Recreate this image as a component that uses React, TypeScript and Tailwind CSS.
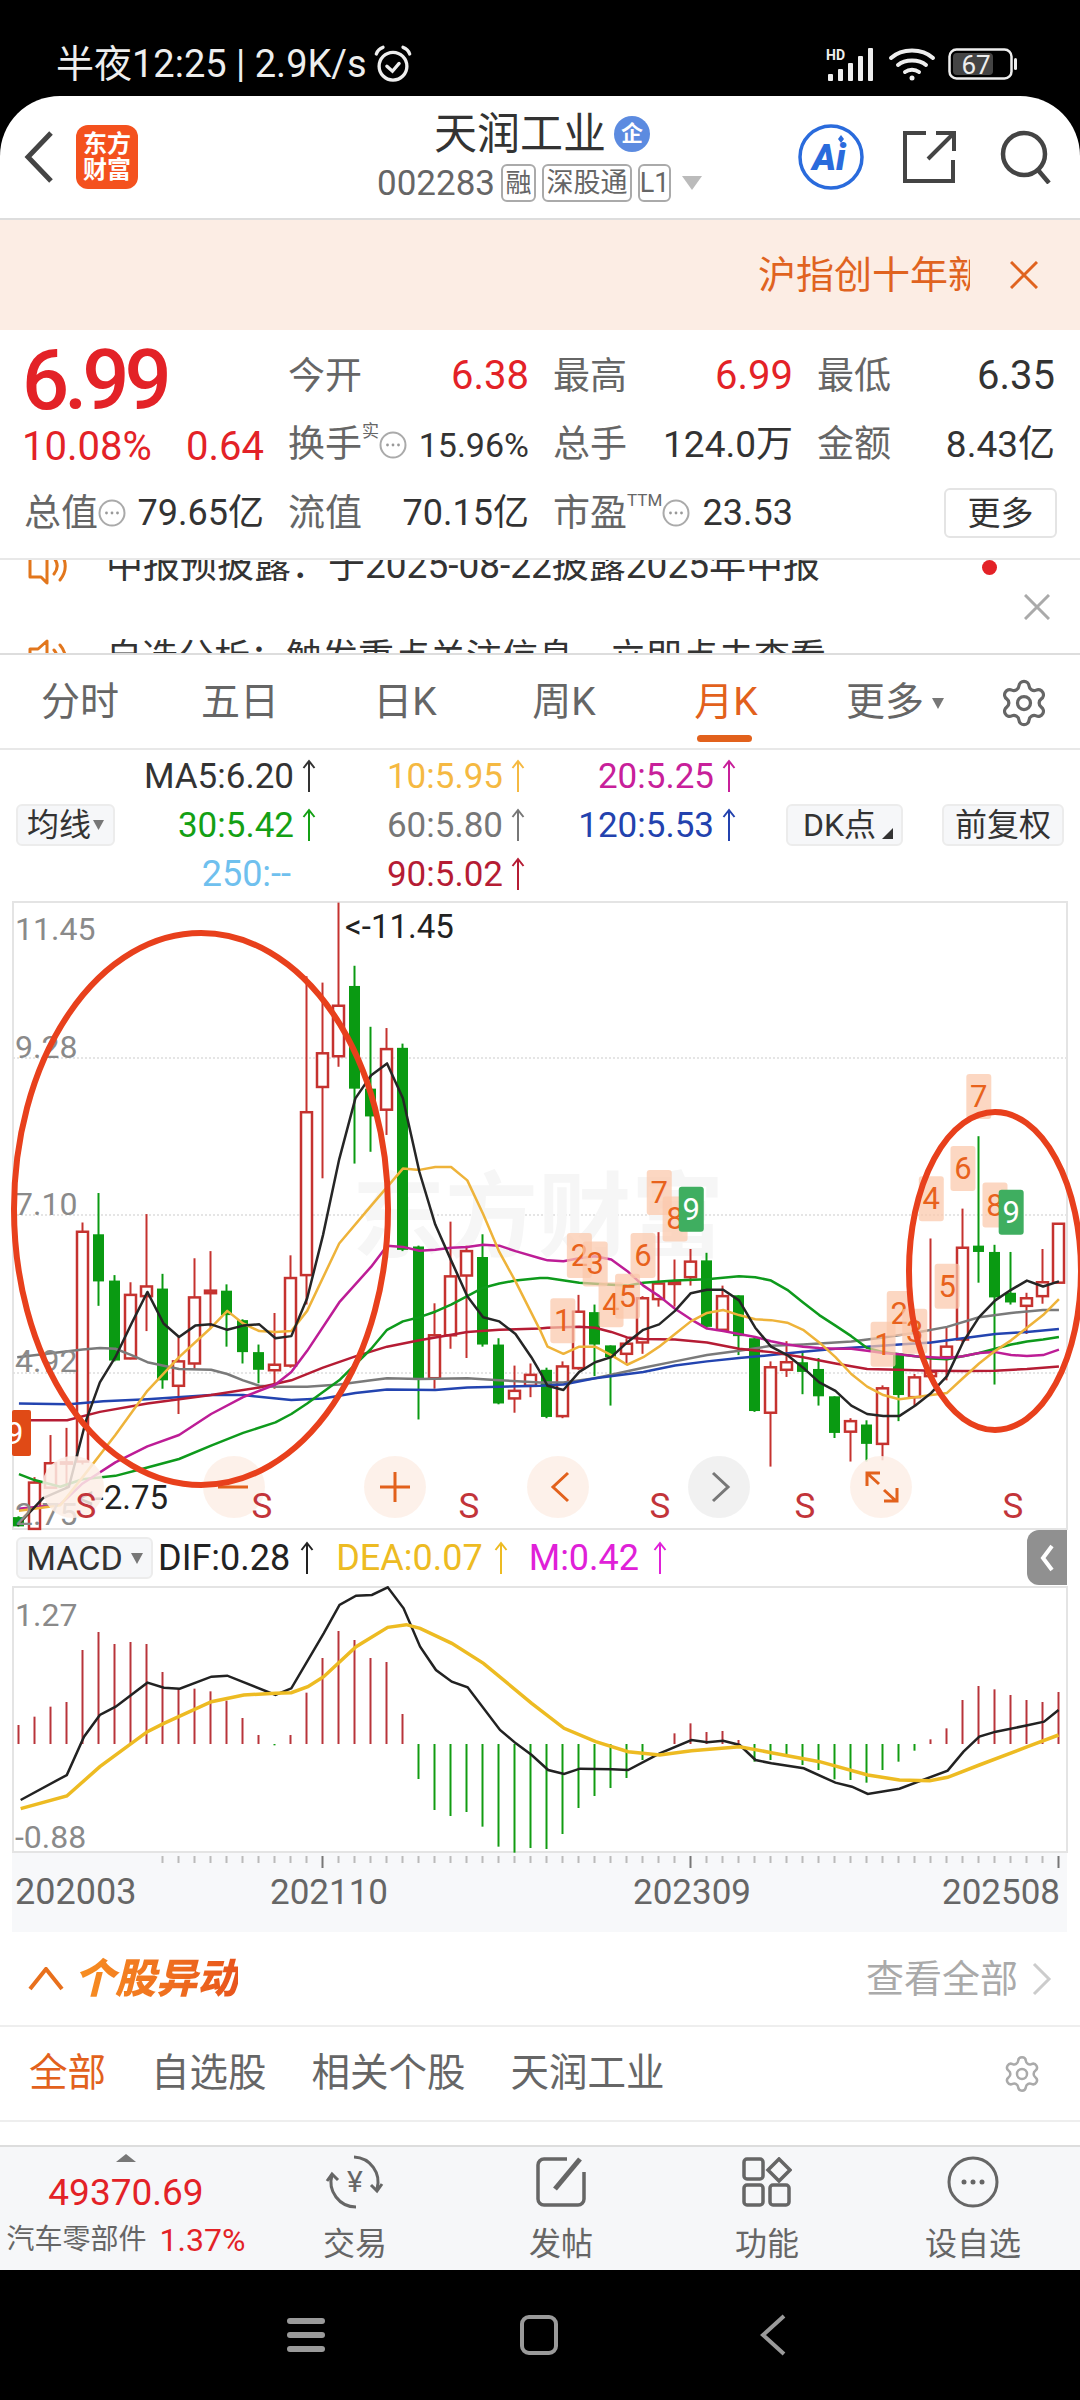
import { Settings } from 'lucide-react';

const RED = '#c5322f';
const GREEN = '#0a9a12';
const ORANGE = '#e2611c';

// crop coordinates -> page coordinates
const ly = (z: number) => 890 + z / 2.376;
const lx = (z: number) => z / 2.904;
const rx = (z: number) => 540 + z / 2.904;
const my = (z: number) => 1530 + z / 3;
const mx = (z: number) => z / 1.452;
const cx = (i: number) => 18.5 + 16 * i;

// i, high, top, bottom, low, up
const candles: [number, number, number, number, number, number][] = [
  [0, 1488, 1490, 1512, 1512, 0], [1, 1395, 1408, 1518, 1518, 1], [2, 1295, 1362, 1420, 1420, 1],
  [3, 1278, 1360, 1363, 1420, 1], [4, 790, 812, 1358, 1365, 1], [5, 720, 818, 930, 988, 0],
  [6, 915, 928, 1118, 1120, 0], [7, 932, 962, 1113, 1115, 1], [8, 770, 942, 965, 1048, 1],
  [9, 912, 947, 1165, 1185, 0], [10, 1060, 1120, 1178, 1245, 1], [11, 875, 968, 1125, 1140, 1],
  [12, 858, 952, 958, 1040, 1], [13, 937, 952, 1010, 1085, 0], [14, 1020, 1022, 1098, 1125, 0],
  [15, 1080, 1098, 1140, 1172, 0], [16, 1005, 1128, 1141, 1185, 1], [17, 868, 922, 1130, 1135, 1],
  [18, 205, 528, 915, 985, 1], [19, 220, 388, 468, 685, 1], [20, 30, 275, 395, 420, 1],
  [21, 180, 228, 472, 650, 0], [22, 325, 472, 538, 622, 0], [23, 328, 378, 522, 582, 1],
  [24, 365, 375, 855, 858, 0], [25, 845, 847, 1160, 1258, 0], [26, 982, 1058, 1160, 1185, 1],
  [27, 788, 918, 1058, 1090, 1], [28, 845, 858, 916, 1112, 1], [29, 818, 872, 1080, 1085, 0],
  [30, 1065, 1080, 1220, 1222, 0], [31, 1130, 1190, 1208, 1242, 1], [32, 1125, 1152, 1178, 1205, 1],
  [33, 1135, 1140, 1252, 1255, 0], [34, 1120, 1132, 1250, 1255, 1], [35, 962, 1002, 1136, 1140, 1],
  [36, 985, 1003, 1080, 1155, 0], [37, 1082, 1082, 1110, 1225, 0], [38, 1065, 1078, 1102, 1125, 1],
  [39, 965, 970, 1075, 1102, 1], [40, 813, 935, 972, 990, 1], [41, 878, 932, 936, 990, 1],
  [42, 853, 883, 920, 940, 1], [43, 862, 880, 1038, 1040, 0], [44, 940, 965, 1045, 1050, 1],
  [45, 963, 963, 1060, 1105, 0], [46, 1062, 1065, 1238, 1240, 0], [47, 1120, 1134, 1242, 1370, 1],
  [48, 1072, 1122, 1140, 1157, 1], [49, 1095, 1122, 1145, 1198, 0], [50, 1112, 1138, 1203, 1225, 0],
  [51, 1203, 1203, 1290, 1302, 0], [52, 1255, 1262, 1287, 1358, 1], [53, 1260, 1270, 1316, 1358, 0],
  [54, 1177, 1184, 1316, 1355, 1], [55, 1100, 1105, 1200, 1262, 0], [56, 1150, 1158, 1205, 1225, 1],
  [57, 828, 1145, 1155, 1158, 1], [58, 1040, 1085, 1110, 1165, 1], [59, 757, 850, 1068, 1075, 1],
  [60, 585, 845, 860, 933, 0], [61, 843, 860, 968, 1175, 0], [62, 860, 957, 980, 985, 0],
  [63, 957, 970, 988, 1055, 1], [64, 853, 932, 965, 983, 1], [65, 793, 793, 933, 933, 1],
];

type Pts = [number, number][];
const maLines: { color: string; width: number; left: Pts; right: Pts }[] = [
  {
    color: '#7a7a7a', width: 2.5,
    left: [[50, 1110], [240, 1092], [290, 1088], [335, 1090], [382, 1105], [428, 1122], [520, 1138], [613, 1140], [660, 1150], [706, 1165], [753, 1178], [800, 1180], [892, 1180], [985, 1175], [1078, 1165], [1124, 1160], [1218, 1162], [1357, 1160], [1450, 1165], [1568, 1170]],
    right: [[68, 1170], [160, 1160], [300, 1135], [392, 1120], [485, 1105], [578, 1095], [671, 1083], [764, 1080], [904, 1073], [997, 1063], [1090, 1052], [1182, 1038], [1275, 1015], [1368, 1005], [1461, 998], [1507, 998]],
  },
  {
    color: '#2344b0', width: 2.5,
    left: [[55, 1220], [200, 1222], [300, 1215], [428, 1210], [613, 1200], [706, 1200], [846, 1212], [938, 1208], [1032, 1195], [1124, 1187], [1264, 1188], [1357, 1182], [1568, 1178]],
    right: [[68, 1175], [160, 1160], [300, 1145], [392, 1130], [485, 1120], [578, 1112], [671, 1105], [764, 1097], [858, 1090], [950, 1085], [1043, 1080], [1136, 1075], [1228, 1065], [1322, 1055], [1414, 1050], [1507, 1043]],
  },
  {
    color: '#b51c34', width: 2.5,
    left: [[36, 1260], [195, 1260], [290, 1240], [428, 1220], [613, 1200], [753, 1182], [846, 1165], [938, 1135], [1032, 1108], [1124, 1085], [1218, 1070], [1357, 1050], [1450, 1045], [1568, 1042]],
    right: [[22, 1040], [114, 1038], [160, 1040], [207, 1050], [253, 1063], [300, 1067], [392, 1068], [485, 1075], [578, 1090], [671, 1098], [764, 1110], [858, 1125], [950, 1138], [1043, 1140], [1136, 1142], [1228, 1143], [1322, 1142], [1414, 1138], [1507, 1132]],
  },
  {
    color: '#0e9a1c', width: 2.5,
    left: [[55, 1388], [100, 1402], [175, 1418], [240, 1400], [335, 1392], [428, 1372], [520, 1352], [613, 1320], [706, 1290], [800, 1265], [846, 1245], [892, 1220], [985, 1165], [1078, 1090], [1124, 1045], [1170, 1025], [1218, 1015], [1264, 1002], [1310, 985], [1357, 965], [1403, 945], [1450, 935], [1497, 928], [1568, 922]],
    right: [[22, 922], [114, 933], [207, 938], [253, 940], [300, 933], [392, 928], [485, 925], [578, 918], [625, 920], [671, 928], [718, 950], [764, 980], [811, 1010], [858, 1035], [904, 1060], [950, 1088], [997, 1098], [1043, 1103], [1090, 1108], [1136, 1113], [1182, 1115], [1228, 1108], [1275, 1100], [1322, 1090], [1368, 1080], [1414, 1073], [1461, 1068], [1507, 1062]],
  },
  {
    color: '#bd1d96', width: 2.5,
    left: [[55, 1470], [175, 1460], [240, 1410], [335, 1360], [428, 1322], [520, 1295], [613, 1245], [706, 1205], [800, 1175], [846, 1145], [892, 1095], [985, 980], [1078, 895], [1124, 845], [1170, 848], [1218, 857], [1264, 855], [1310, 850], [1357, 848], [1403, 843], [1450, 845], [1497, 858], [1568, 875]],
    right: [[22, 880], [68, 882], [114, 875], [160, 870], [207, 878], [253, 905], [300, 940], [346, 965], [392, 995], [438, 1020], [485, 1042], [532, 1048], [578, 1055], [625, 1062], [671, 1072], [718, 1080], [764, 1085], [811, 1088], [858, 1090], [904, 1090], [950, 1095], [997, 1100], [1043, 1103], [1090, 1108], [1136, 1110], [1182, 1112], [1228, 1108], [1275, 1100], [1322, 1098], [1368, 1105], [1414, 1107], [1461, 1105], [1507, 1092]],
  },
  {
    color: '#eeb33a', width: 2.5,
    left: [[55, 1475], [175, 1462], [240, 1395], [335, 1295], [428, 1190], [520, 1110], [613, 1040], [660, 1000], [706, 1030], [753, 1048], [800, 1050], [846, 1048], [892, 1000], [985, 840], [1078, 750], [1170, 662], [1218, 665], [1264, 658], [1310, 658], [1357, 690], [1403, 770], [1450, 860], [1497, 930], [1568, 1045]],
    right: [[22, 1085], [68, 1102], [114, 1085], [160, 1085], [207, 1105], [253, 1128], [300, 1110], [346, 1085], [392, 1055], [438, 1025], [485, 1005], [532, 998], [578, 1010], [625, 1020], [671, 1022], [718, 1028], [764, 1045], [811, 1075], [858, 1110], [904, 1150], [950, 1180], [997, 1200], [1043, 1210], [1090, 1205], [1136, 1200], [1182, 1195], [1228, 1160], [1275, 1125], [1322, 1095], [1368, 1070], [1414, 1040], [1461, 1010], [1507, 972]],
  },
  {
    color: '#262626', width: 2.5,
    left: [[50, 1510], [125, 1445], [200, 1418], [250, 1260], [290, 1170], [335, 1110], [382, 1030], [428, 955], [475, 1030], [520, 1062], [567, 1035], [613, 1032], [660, 1045], [706, 1035], [753, 1032], [800, 1065], [846, 1060], [892, 970], [938, 820], [985, 640], [1032, 495], [1078, 440], [1124, 412], [1170, 495], [1218, 670], [1264, 795], [1310, 880], [1357, 965], [1403, 1015], [1450, 1025], [1497, 1055], [1543, 1110]],
    right: [[0, 1145], [22, 1178], [68, 1188], [114, 1145], [160, 1122], [207, 1110], [253, 1075], [300, 1045], [346, 1032], [392, 1000], [438, 958], [485, 950], [532, 950], [578, 975], [625, 1040], [671, 1085], [718, 1105], [764, 1135], [811, 1170], [858, 1190], [904, 1225], [950, 1245], [997, 1250], [1043, 1250], [1090, 1225], [1136, 1195], [1182, 1155], [1228, 1075], [1275, 1015], [1322, 975], [1368, 950], [1414, 928], [1461, 942], [1507, 930]],
  },
];

const tags: [string, number, number][] = [
  ['1', 30, 970], ['2', 78, 815], ['3', 124, 835], ['4', 170, 932], ['5', 218, 912], ['6', 263, 815],
  ['7', 310, 665], ['8', 356, 728], ['9', 403, 705],
  ['1', 960, 1026], ['2', 1007, 953], ['3', 1052, 995], ['4', 1100, 680], ['5', 1146, 888], ['6', 1192, 608],
  ['7', 1238, 437], ['8', 1285, 695], ['9', 1332, 712],
];

// top of the red bars and bottom of the green ones, from the first month
const macdBars = [
  585, 560, 530, 516, 360, 306, 342, 336, 342, 426, 476, 476, 484, 512, 564, 615, 646, 615, 488, 384, 303, 330, 384, 396, 552,
  747, 840, 858, 846, 890, 950, 968, 954, 957, 912, 834, 798, 774, 744, 690, 642,
  610, 580, 606, 603, 630, 695, 690, 680, 705, 720, 748, 750, 758, 720, 695, 662,
  628, 595, 510, 468, 478, 495, 510, 516, 486,
];
const dif: Pts = [[30, 810], [97, 735], [122, 620], [145, 555], [168, 530], [214, 458], [238, 473], [261, 476], [307, 440], [330, 437], [400, 495], [423, 475], [470, 310], [493, 225], [517, 197], [540, 195], [563, 172], [586, 235], [610, 350], [633, 420], [656, 455], [679, 472], [726, 600], [749, 640], [772, 675], [796, 720], [819, 732], [842, 716], [888, 718], [912, 720], [958, 670], [1004, 630], [1027, 637], [1050, 632], [1074, 645], [1097, 690], [1120, 700], [1167, 715], [1213, 758], [1237, 770], [1260, 792], [1306, 776], [1376, 722], [1399, 665], [1422, 620], [1446, 605], [1492, 586], [1516, 575], [1537, 540]];
const dea: Pts = [[30, 836], [97, 798], [145, 710], [214, 605], [238, 580], [307, 515], [354, 495], [400, 490], [423, 488], [447, 470], [470, 440], [517, 350], [563, 292], [590, 284], [610, 295], [656, 340], [702, 400], [772, 520], [819, 595], [865, 635], [912, 665], [958, 675], [1004, 662], [1074, 650], [1120, 668], [1190, 695], [1260, 735], [1306, 750], [1350, 752], [1376, 742], [1422, 705], [1492, 650], [1537, 615]];

function UpArrow({ className }: { className: string }) {
  return (
    <svg width="16" height="34" viewBox="0 0 16 34" fill="none" stroke="currentColor" strokeWidth="2" className={className}>
      <path d="M8 33V2M2.5 9 8 2l5.5 7" />
    </svg>
  );
}

function Legend({ text, color }: { text: string; color: string }) {
  return (
    <div className={`flex items-center justify-end gap-[7px] ${color}`}>
      <span>{text}</span>
      <UpArrow className="shrink-0" />
    </div>
  );
}

function DotsBadge() {
  return (
    <svg width="28" height="28" viewBox="0 0 28 28" fill="none" className="shrink-0">
      <circle cx="14" cy="14" r="12.5" stroke="#aaa" strokeWidth="2" />
      <circle cx="8.5" cy="14" r="1.4" fill="#999" />
      <circle cx="14" cy="14" r="1.4" fill="#999" />
      <circle cx="19.5" cy="14" r="1.4" fill="#999" />
    </svg>
  );
}

function Speaker() {
  return (
    <svg width="46" height="46" viewBox="0 0 46 46" fill="none" stroke="#e2761c" strokeWidth="3" className="shrink-0">
      <path d="M3 14h8l9-8v34l-6-6H3z" strokeLinejoin="round" />
      <path d="M27 15c4 5 4 11 0 16M33 10c7 8 7 18 0 27" strokeLinecap="round" />
    </svg>
  );
}

function Stat({ label, value, valueClass, children }: { label: string; value: string; valueClass?: string; children?: React.ReactNode }) {
  return (
    <div className="flex items-center justify-between">
      <div className="flex items-center">
        <span className="text-[37px] text-[#666]">{label}</span>
        {children}
      </div>
      <span className={valueClass ?? 'text-[36px] text-[#333]'}>{value}</span>
    </div>
  );
}

function KLineChart() {
  return (
    <svg viewBox="0 900 1080 630" width="1080" height="630" className="block overflow-visible">
      <rect x="13" y="902" width="1054" height="627" fill="#fff" stroke="#e4e4e4" strokeWidth="2" />
      {[1058, 1215, 1373].map((y) => (
        <line key={y} x1="13" x2="1066" y1={y} y2={y} stroke="#ddd" strokeWidth="1.5" strokeDasharray="2 2" />
      ))}
      <text x="352" y="1250" fontSize="93" fontWeight="700" fill="#f6f6f6">东方财富</text>

      {candles.map(([i, high, top, bottom, low, up]) => {
        const x = cx(i);
        const color = up ? RED : GREEN;
        return (
          <g key={i}>
            <line x1={x} x2={x} y1={ly(high)} y2={ly(low)} stroke={color} strokeWidth="2" />
            {up ? (
              <rect x={x - 5.5} y={ly(top)} width="11" height={Math.max(ly(bottom) - ly(top), 1)} fill="#fff" stroke={color} strokeWidth="2.5" />
            ) : (
              <rect x={x - 5.5} y={ly(top)} width="11" height={ly(bottom) - ly(top)} fill={color} />
            )}
          </g>
        );
      })}

      {maLines.map((m) => (
        <polyline
          key={m.color}
          fill="none"
          stroke={m.color}
          strokeWidth={m.width}
          strokeLinejoin="round"
          points={[...m.left.map(([x, y]) => `${lx(x)},${ly(y)}`), ...m.right.map(([x, y]) => `${rx(x)},${ly(y)}`)].join(' ')}
        />
      ))}

      {tags.map(([label, x, y], i) => {
        const green = label === '9';
        return (
          <g key={i}>
            <rect x={rx(x)} y={ly(y)} width="25" height="45" rx="3" fill={green ? '#3fae60' : '#fbc7aa'} fillOpacity={green ? 1 : 0.72} />
            <text x={rx(x) + 12.5} y={ly(y) + 33} fontSize="31" textAnchor="middle" fill={green ? '#fff' : '#e8621c'}>{label}</text>
          </g>
        );
      })}
      <rect x="12" y="1410" width="19" height="46" rx="2" fill="#e04a16" />
      <text x="6" y="1444" fontSize="31" fill="#fff">9</text>

      <g fontSize="32" fill="#8a8a8a">
        <text x="15" y="940">11.45</text>
        <text x="15" y="1058">9.28</text>
        <text x="15" y="1215">7.10</text>
        <text x="15" y="1372">4.92</text>
        <text x="15" y="1525">2.75</text>
      </g>
      <text x="345" y="938" fontSize="33" fill="#222">{'<-11.45'}</text>
      <text x="168" y="1509" fontSize="33" textAnchor="end" fill="#222">{'<-2.75'}</text>

      {[73, 234, 395, 558, 881].map((x) => (
        <circle key={x} cx={x} cy="1487" r="31" fill="#fdeee6" fillOpacity="0.85" />
      ))}
      <circle cx="719" cy="1487" r="31" fill="#efefef" fillOpacity="0.9" />
      <g fill="none" stroke={ORANGE} strokeWidth="3">
        <path d="M218 1487h30M380 1487h30M395 1472v30M568 1473l-15 14 15 14" />
        <path d="M868 1474l11 10M867 1486v-13h13M896 1501l-12-11M897 1488v13h-13" />
      </g>
      <path d="M713 1473l15 14-15 14" fill="none" stroke="#777" strokeWidth="3" />

      <g fontSize="35" fill="#c2343a" textAnchor="middle">
        {[86, 262, 469, 660, 805, 1013].map((x) => (
          <text key={x} x={x} y="1518">S</text>
        ))}
      </g>

      <g fill="none" stroke="#e8401c" strokeWidth="6">
        <ellipse cx="201" cy="1209" rx="187" ry="276" />
        <ellipse cx="995" cy="1271" rx="86" ry="159" />
      </g>
    </svg>
  );
}

function MacdChart() {
  return (
    <svg viewBox="0 1586 1080 267" width="1080" height="267" className="block">
      <rect x="13" y="1587" width="1054" height="265" fill="#fff" stroke="#e4e4e4" strokeWidth="2" />
      {macdBars.map((v, i) => {
        const y = my(v);
        const zero = my(642);
        return (
          <line key={i} x1={cx(i)} x2={cx(i)} y1={zero} y2={y} stroke={y > zero ? '#129c12' : '#b8343a'} strokeWidth="2" />
        );
      })}
      <polyline fill="none" stroke="#222" strokeWidth="2.5" points={dif.map(([x, y]) => `${mx(x)},${my(y)}`).join(' ')} />
      <polyline fill="none" stroke="#edbb22" strokeWidth="3.5" points={dea.map(([x, y]) => `${mx(x)},${my(y)}`).join(' ')} />
      <text x="15" y="1626" fontSize="32" fill="#8a8a8a">1.27</text>
      <text x="15" y="1848" fontSize="32" fill="#8a8a8a">-0.88</text>
    </svg>
  );
}

function TimeAxis() {
  return (
    <svg viewBox="12 1853 1055 79" width="1055" height="79" className="block">
      {macdBars.slice(9).map((_, n) => {
        const i = n + 9;
        const major = i === 19 || i === 42 || i === 65;
        return <line key={i} x1={cx(i)} x2={cx(i)} y1="1856" y2={major ? 1868 : 1863} stroke={major ? '#777' : '#bbb'} strokeWidth="2" />;
      })}
      <g fontSize="36" fill="#666">
        <text x="15" y="1904">202003</text>
        <text x="329" y="1904" textAnchor="middle" fontSize="35">202110</text>
        <text x="692" y="1904" textAnchor="middle" fontSize="35">202309</text>
        <text x="1060" y="1904" textAnchor="end" fontSize="35">202508</text>
      </g>
    </svg>
  );
}

function BottomItem({ label, children }: { label: string; children: React.ReactNode }) {
  return (
    <div className="flex w-[206px] flex-col items-center text-[32px] leading-none text-[#666]">
      <div className="flex h-[56px] items-center">{children}</div>
      <span className="mt-[18px]">{label}</span>
    </div>
  );
}

export default function App() {
  return (
    <div className="flex h-[2400px] w-[1080px] flex-col overflow-hidden bg-black font-[family-name:Roboto,'Noto_Sans_CJK_SC',sans-serif]">
      {/* status bar */}
      <div className="flex h-[96px] shrink-0 items-center justify-between pl-[56px] pr-[62px] pt-[32px] text-[#eee]">
        <div className="flex items-center gap-[6px] text-[38px] leading-none">
          <span>半夜12:25 | 2.9K/s</span>
          <svg width="40" height="40" viewBox="0 0 36 36" fill="none" stroke="#eee" strokeWidth="3">
            <circle cx="18" cy="20" r="12.5" />
            <path d="M12.5 20l5 4.5 6-7M3 9c1-3 3-5 6-6M33 9c-1-3-3-5-6-6" strokeLinecap="round" />
          </svg>
        </div>
        <div className="flex items-center gap-[12px]">
          <svg width="50" height="34" viewBox="0 0 50 34" fill="#eee">
            <text x="0" y="13" fontSize="14" fontWeight="700">HD</text>
            <rect x="2" y="27" width="5" height="7" rx="1" />
            <rect x="12" y="22" width="5" height="12" rx="1" />
            <rect x="22" y="16" width="5" height="18" rx="1" />
            <rect x="32" y="9" width="5" height="25" rx="1" />
            <rect x="42" y="1" width="5" height="33" rx="1" />
          </svg>
          <svg width="48" height="36" viewBox="0 0 48 36" fill="none" stroke="#eee" strokeWidth="4" strokeLinecap="round">
            <path d="M3 12c11-10 31-10 42 0M10 19c7-6 21-6 28 0M17 26c4-3 10-3 14 0" />
            <circle cx="24" cy="32" r="2.5" fill="#eee" stroke="none" />
          </svg>
          <svg width="70" height="32" viewBox="0 0 70 32">
            <rect x="1.5" y="1.5" width="62" height="29" rx="7" fill="none" stroke="#eee" strokeWidth="2.5" />
            <rect x="5" y="5" width="40" height="22" rx="4" fill="#444" />
            <rect x="66" y="10" width="3" height="12" rx="1.5" fill="#eee" />
            <text x="28" y="26" fontSize="26" textAnchor="middle" fill="#eee">67</text>
          </svg>
        </div>
      </div>

      <main className="flex h-[2174px] shrink-0 flex-col overflow-hidden rounded-t-[60px] bg-white">
        {/* title bar */}
        <header className="relative flex h-[124px] shrink-0 items-center border-b-2 border-[#ddd]">
          <svg width="30" height="52" viewBox="0 0 30 52" fill="none" stroke="#444" strokeWidth="5" className="ml-[24px]">
            <path d="M27 2 4 26l23 24" />
          </svg>
          <div className="ml-[22px] grid h-[64px] w-[62px] grid-cols-2 place-items-center rounded-[12px] bg-[#f4511e] px-[7px] py-[6px] text-[24px] font-bold leading-none text-white">
            <span>东</span><span>方</span><span>财</span><span>富</span>
          </div>
          <div className="absolute left-[377px] top-[14px] flex flex-col">
            <div className="ml-[57px] flex items-center gap-[8px]">
              <span className="text-[43px] leading-[48px] text-[#333]">天润工业</span>
              <span className="flex h-[36px] w-[36px] items-center justify-center rounded-full bg-[#5c8be0] text-[22px] font-bold leading-none text-white">企</span>
            </div>
            <div className="mt-[6px] flex items-center gap-[6px] text-[#666]">
              <span className="text-[35px] leading-none">002283</span>
              <span className="flex h-[38px] w-[35px] items-center justify-center rounded-[6px] border-2 border-[#aaa] text-[26px] leading-none">融</span>
              <span className="flex h-[38px] w-[90px] items-center justify-center rounded-[6px] border-2 border-[#aaa] text-[27px] leading-none">深股通</span>
              <span className="flex h-[38px] w-[33px] items-center justify-center rounded-[6px] border-2 border-[#aaa] text-[27px] leading-none">L1</span>
              <svg width="20" height="14" viewBox="0 0 20 14" className="ml-[5px]"><path d="M0 0h20L10 14z" fill="#bbb" /></svg>
            </div>
          </div>
          <div className="ml-auto mr-[28px] flex items-center">
            <svg width="66" height="66" viewBox="0 0 66 66" className="mr-[38px]">
              <circle cx="33" cy="33" r="31" fill="#fff" stroke="#2a6bdc" strokeWidth="3.5" />
              <text x="31" y="46" fontSize="36" fontWeight="900" fontStyle="italic" textAnchor="middle" fill="#2a6bdc">Ai</text>
              <path d="M43 11l3 4-3 4-3-4z" fill="#2a6bdc" />
            </svg>
            <svg width="54" height="54" viewBox="0 0 54 54" fill="none" stroke="#444" strokeWidth="4" className="mr-[44px]">
              <path d="M24 3H3v48h48V30M26 29 51 4M34 3h18v18" />
            </svg>
            <svg width="52" height="54" viewBox="0 0 52 54" fill="none" stroke="#444" strokeWidth="4.5">
              <circle cx="24" cy="24" r="21" />
              <path d="m38 40 11 13" />
            </svg>
          </div>
        </header>

        {/* banner */}
        <div className="flex h-[110px] shrink-0 items-center justify-end bg-[#fcede4] pr-[42px]">
          <div className="w-[212px] overflow-hidden whitespace-nowrap text-[38px] leading-none text-[#e0631f]">沪指创十年新高</div>
          <svg width="28" height="28" viewBox="0 0 28 28" fill="none" stroke="#e0631f" strokeWidth="3" className="ml-[40px]">
            <path d="m1 1 26 26M27 1 1 27" />
          </svg>
        </div>

        {/* quote */}
        <section className="grid h-[230px] shrink-0 grid-cols-[240px_241px_240px_238px] grid-rows-[68px_69px_68px] gap-x-[24px] border-b-2 border-[#e8e8e8] px-[24px] pt-[12px] text-[36px] leading-none">
          <div className="row-span-2 flex flex-col justify-between pb-[12px]">
            <span className="-ml-[2px] text-[83px] font-medium leading-[78px] tracking-[-5px] text-[#e32227]">6.99</span>
            <div className="flex justify-between text-[40px] text-[#e32227]">
              <span className="-ml-[2px]">10.08%</span>
              <span>0.64</span>
            </div>
          </div>
          <Stat label="今开" value="6.38" valueClass="text-[40px] text-[#e32227]" />
          <Stat label="最高" value="6.99" valueClass="text-[40px] text-[#e32227]" />
          <Stat label="最低" value="6.35" valueClass="text-[40px] text-[#333]" />
          <Stat label="换手" value="15.96%" valueClass="text-[34px] text-[#333]">
            <span className="-mt-[26px] text-[17px] text-[#666]">实</span>
            <DotsBadge />
          </Stat>
          <Stat label="总手" value="124.0万" valueClass="text-[37px] text-[#333]" />
          <Stat label="金额" value="8.43亿" valueClass="text-[37px] text-[#333]" />
          <Stat label="总值" value="79.65亿">
            <DotsBadge />
          </Stat>
          <Stat label="流值" value="70.15亿" />
          <Stat label="市盈" value="23.53">
            <span className="-mt-[26px] text-[17px] text-[#666]">TTM</span>
            <DotsBadge />
          </Stat>
          <div className="flex items-center justify-end">
            <span className="-mr-[2px] flex h-[50px] w-[113px] items-center justify-center rounded-[6px] border-2 border-[#e4e4e4] text-[33px] text-[#333]">更多</span>
          </div>
        </section>

        {/* news ticker */}
        <section className="relative h-[95px] shrink-0 overflow-hidden border-b-2 border-[#ddd]">
          <div className="-mt-[40px] flex h-[92px] items-center gap-[33px] pl-[27px] text-[37px] text-[#333]">
            <Speaker />
            <span>中报预披露：于2025-08-22披露2025年中报</span>
          </div>
          <div className="flex h-[92px] items-center gap-[33px] pl-[27px] text-[36px] text-[#333]">
            <Speaker />
            <span>自选分析：触发重点关注信息，立即点击查看</span>
          </div>
          <span className="absolute left-[982px] top-0 h-[15px] w-[15px] rounded-full bg-[#e32227]" />
          <svg width="26" height="26" viewBox="0 0 26 26" fill="none" stroke="#aaa" strokeWidth="3" className="absolute left-[1024px] top-[34px]">
            <path d="m1 1 24 24M25 1 1 25" />
          </svg>
        </section>

        {/* period tabs */}
        <nav className="relative flex h-[95px] shrink-0 items-center border-b-2 border-[#e8e8e8] pt-[2px] text-center text-[39px] leading-none text-[#666]">
          <span className="w-[160px]">分时</span>
          <span className="w-[160px]">五日</span>
          <span className="w-[170px]">日K</span>
          <span className="w-[148px]">周K</span>
          <span className="w-[176px] text-[#e2611c]">月K</span>
          <span className="flex w-[162px] items-center justify-center gap-[8px]">
            更多
            <svg width="12" height="14" viewBox="0 0 12 14"><path d="M0 2h12L6 13z" fill="#777" /></svg>
          </span>
          <Settings size={52} strokeWidth={1.5} color="#666" className="ml-[22px]" />
          <span className="absolute bottom-[6px] left-[697px] h-[7px] w-[55px] rounded-full bg-[#e2611c]" />
        </nav>

        {/* MA legend */}
        <section className="flex h-[150px] shrink-0 items-center pl-[16px] text-[35px] leading-[49px]">
          <button className="flex h-[42px] w-[99px] items-center justify-center gap-[2px] rounded-[6px] border-2 border-[#ececec] bg-[#f6f7f9] text-[32px] text-[#333]">
            均线
            <svg width="11" height="12" viewBox="0 0 11 12"><path d="M0 1h11L5.500 11z" fill="#777" /></svg>
          </button>
          <div className="grid w-[622px] grid-cols-[202px_209px_211px] grid-rows-[49px_49px_49px]">
            <Legend text="MA5:6.20" color="text-[#333]" />
            <Legend text="10:5.95" color="text-[#f5b942]" />
            <Legend text="20:5.25" color="text-[#c8209a]" />
            <Legend text="30:5.42" color="text-[#14a014]" />
            <Legend text="60:5.80" color="text-[#777]" />
            <Legend text="120:5.53" color="text-[#2342ae]" />
            <div className="pr-[26px] text-right text-[36px] text-[#6fc0ee]">250:--</div>
            <Legend text="90:5.02" color="text-[#b51c34]" />
          </div>
          <button className="relative ml-[49px] flex h-[42px] w-[117px] items-center justify-center rounded-[6px] border-2 border-[#ececec] bg-[#f6f7f9] pr-[10px] text-[32px] text-[#333]">
            DK点
            <svg width="11" height="11" viewBox="0 0 11 11" className="absolute bottom-[5px] right-[8px]"><path d="M11 0v11H0z" fill="#333" /></svg>
          </button>
          <button className="ml-[39px] flex h-[42px] w-[122px] items-center justify-center rounded-[6px] border-2 border-[#ececec] bg-[#f6f7f9] text-[32px] text-[#333]">前复权</button>
        </section>

        <KLineChart />

        {/* MACD */}
        <section className="relative flex h-[56px] shrink-0 items-center pl-[16px] text-[36px] leading-none">
          <button className="flex h-[42px] w-[137px] items-center justify-center gap-[8px] rounded-[6px] border-2 border-[#ececec] bg-[#f6f7f9] text-[34px] text-[#333]">
            MACD
            <svg width="12" height="13" viewBox="0 0 12 13"><path d="M0 1h12L6 12z" fill="#777" /></svg>
          </button>
          <div className="ml-[5px] flex items-center gap-[9px] text-[#222]"><span>DIF:0.28</span><UpArrow className="shrink-0" /></div>
          <div className="ml-[21px] flex items-center gap-[10px] text-[#edbb22]"><span>DEA:0.07</span><UpArrow className="shrink-0" /></div>
          <div className="ml-[20px] flex items-center gap-[13px] text-[#e020d8]"><span>M:0.42</span><UpArrow className="shrink-0" /></div>
          <div className="absolute right-[13px] top-0 flex h-[55px] w-[40px] items-center justify-center rounded-l-[12px] bg-[#909090]">
            <svg width="14" height="28" viewBox="0 0 14 28" fill="none" stroke="#fff" strokeWidth="4"><path d="M12 2 3 14l9 12" /></svg>
          </div>
        </section>

        <MacdChart />

        <div className="mx-[12px] h-[79px] w-[1055px] shrink-0 bg-[#f7f8fa]">
          <TimeAxis />
        </div>

        {/* unusual moves */}
        <section className="flex h-[95px] shrink-0 items-center justify-between border-b-2 border-[#eee] pl-[28px] pr-[28px]">
          <div className="flex items-center gap-[10px]">
            <svg width="36" height="24" viewBox="0 0 36 24" fill="none" stroke="#e8701c" strokeWidth="4"><path d="m2 22 16-20 16 20" /></svg>
            <span className="bg-gradient-to-r from-[#f79022] to-[#e8541c] bg-clip-text text-[41px] font-black italic leading-[48px] text-transparent">个股异动</span>
          </div>
          <div className="flex items-center gap-[14px] text-[38px] leading-none text-[#aaa]">
            <span>查看全部</span>
            <svg width="20" height="34" viewBox="0 0 20 34" fill="none" stroke="#ccc" strokeWidth="3"><path d="m2 2 15 15L2 32" /></svg>
          </div>
        </section>

        <nav className="flex h-[95px] shrink-0 items-center border-b-2 border-[#eee] pl-[29px] pr-[38px] text-[38.500px] leading-none text-[#666]">
          <span className="text-[#e2611c]">全部</span>
          <span className="ml-[45px]">自选股</span>
          <span className="ml-[45px]">相关个股</span>
          <span className="ml-[45px]">天润工业</span>
          <Settings size={40} strokeWidth={1.5} color="#aaa" className="ml-auto" />
        </nav>

        <div className="h-[23px] shrink-0" />

        {/* bottom bar */}
        <footer className="flex h-[125px] shrink-0 items-start border-t-2 border-[#ddd] bg-[#f6f7f9] pt-[7px]">
          <div className="relative flex w-[252px] shrink-0 flex-col items-center pt-[20px] leading-none">
            <svg width="20" height="8" viewBox="0 0 20 8" className="absolute top-0"><path d="M10 0l10 8H0z" fill="#777" /></svg>
            <span className="text-[37px] text-[#e32227]">49370.69</span>
            <div className="mt-[13px] flex items-center gap-[13px] text-[28px]">
              <span className="text-[#666]">汽车零部件</span>
              <span className="text-[32px] text-[#e32227]">1.37%</span>
            </div>
          </div>
          <BottomItem label="交易">
            <svg width="60" height="56" viewBox="0 0 60 56" fill="none" stroke="#666" strokeWidth="3">
              <path d="M29 3a25 25 0 0 1 23 32M31 53A25 25 0 0 1 7 21M2 27l5-7 6 6M46 31l6 6 5-7" />
              <text x="30" y="38" fontSize="30" textAnchor="middle" fill="#666" stroke="none">¥</text>
            </svg>
          </BottomItem>
          <BottomItem label="发帖">
            <svg width="52" height="52" viewBox="0 0 52 52" fill="none" stroke="#666" strokeWidth="3.5">
              <path d="M32 3H9a6 6 0 0 0-6 6v34a6 6 0 0 0 6 6h34a6 6 0 0 0 6-6V16" />
              <path d="M20 33 45 3" strokeWidth="5" />
            </svg>
          </BottomItem>
          <BottomItem label="功能">
            <svg width="50" height="50" viewBox="0 0 50 50" fill="none" stroke="#666" strokeWidth="3.5">
              <rect x="2" y="2" width="19" height="20" rx="3" />
              <path d="m37 2 11 11-11 11-11-11z" />
              <rect x="2" y="28" width="19" height="20" rx="3" />
              <rect x="28" y="28" width="19" height="20" rx="3" />
            </svg>
          </BottomItem>
          <BottomItem label="设自选">
            <svg width="52" height="52" viewBox="0 0 52 52" fill="none">
              <circle cx="26" cy="26" r="24" stroke="#666" strokeWidth="3" />
              <circle cx="17" cy="26" r="2.500" fill="#666" />
              <circle cx="26" cy="26" r="2.500" fill="#666" />
              <circle cx="35" cy="26" r="2.500" fill="#666" />
            </svg>
          </BottomItem>
        </footer>
      </main>

      {/* system nav */}
      <div className="relative flex h-[130px] shrink-0 items-center pl-[287px]">
        <div className="flex w-[38px] flex-col gap-[8px]">
          <span className="h-[6px] rounded-full bg-[#9a9a9a]" />
          <span className="h-[6px] rounded-full bg-[#9a9a9a]" />
          <span className="h-[6px] rounded-full bg-[#9a9a9a]" />
        </div>
        <span className="ml-[195px] h-[40px] w-[38px] rounded-[9px] border-[4px] border-[#9a9a9a]" />
        <svg width="26" height="42" viewBox="0 0 26 42" fill="none" stroke="#9a9a9a" strokeWidth="4" className="ml-[202px]">
          <path d="M24 2 3 21l21 19" />
        </svg>
      </div>
    </div>
  );
}
